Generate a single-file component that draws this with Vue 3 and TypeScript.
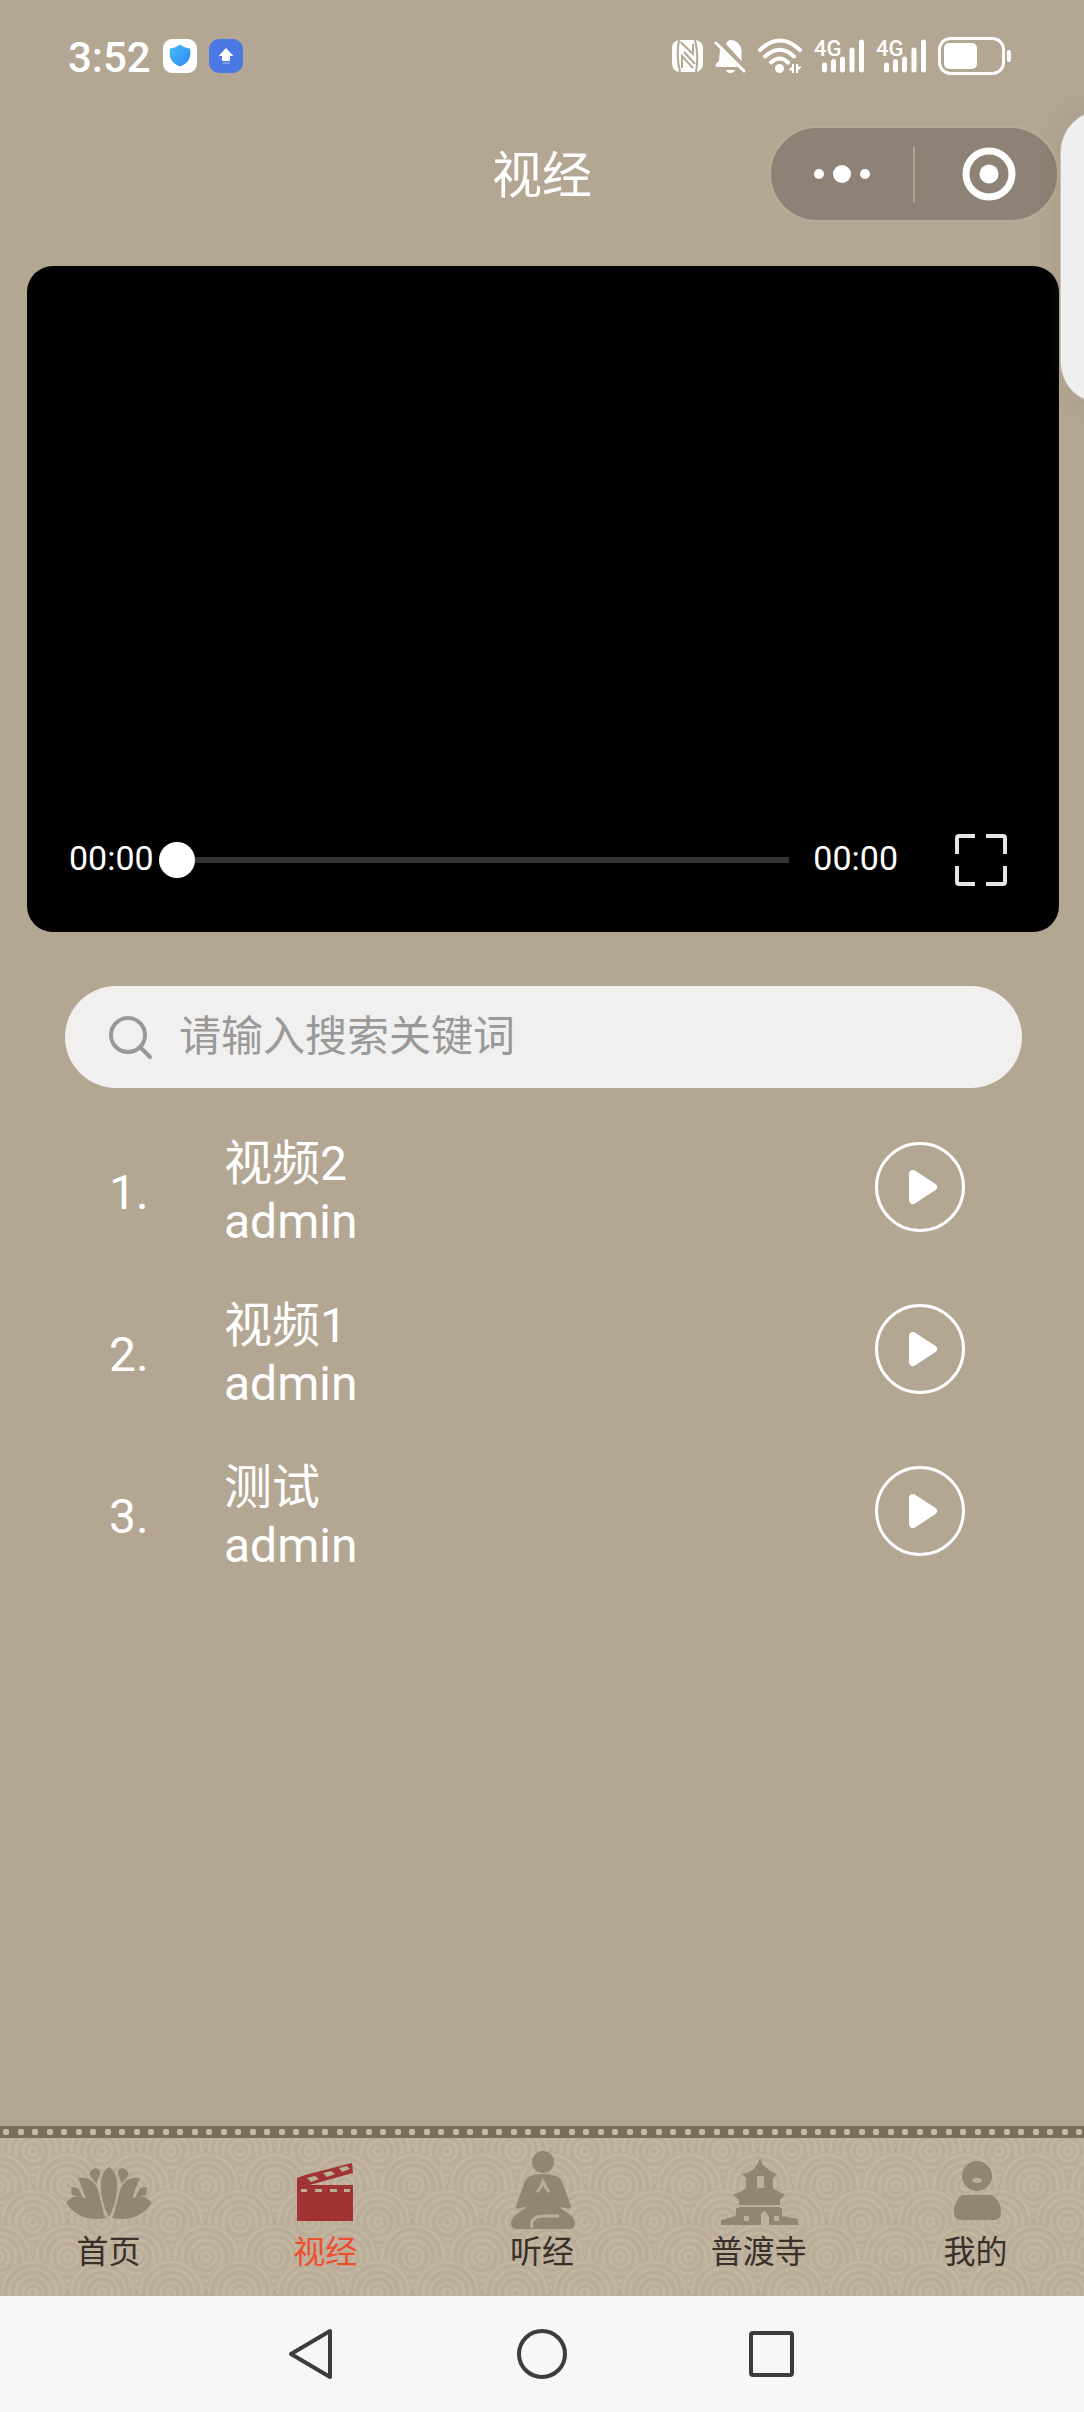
<script setup lang="ts">
import { ref } from 'vue'

interface Video {
  id: number
  title: string
  author: string
}

interface Tab {
  key: string
  label: string
}

const keyword = ref('')
const position = ref(0)
const activeTab = ref('video')

const videos: Video[] = [
  { id: 1, title: '视频2', author: 'admin' },
  { id: 2, title: '视频1', author: 'admin' },
  { id: 3, title: '测试', author: 'admin' },
]

const tabs: Tab[] = [
  { key: 'home', label: '首页' },
  { key: 'video', label: '视经' },
  { key: 'audio', label: '听经' },
  { key: 'temple', label: '普渡寺' },
  { key: 'mine', label: '我的' },
]
</script>

<template>
  <div class="screen">
    <header class="status">
      <div class="status-left">
        <span class="clock">3:52</span>
        <svg width="34" height="34" viewBox="0 0 34 34">
          <defs>
            <linearGradient id="shield" x1="0" y1="0" x2="1" y2="1">
              <stop offset="0" stop-color="#45bdf8" />
              <stop offset="1" stop-color="#2f86f0" />
            </linearGradient>
          </defs>
          <rect width="34" height="34" rx="9" fill="#fff" />
          <path d="M17 5.500C20 8 23 9 27 9.500 28.500 18 26 24 17 27.500 8 24 5.500 18 7 9.500 11 9 14 8 17 5.500z" fill="url(#shield)" />
        </svg>
        <svg width="34" height="34" viewBox="0 0 34 34">
          <rect width="34" height="34" rx="10" fill="#4a78e4" />
          <path d="M17 9.500l6.500 7H20.500v5h-7v-5H10.500z" fill="#fff" stroke="#fff" stroke-width="1" stroke-linejoin="round" />
          <path d="M13.500 24h7" stroke="#a9c0f5" stroke-width="1" />
        </svg>
      </div>
      <div class="status-right">
        <svg width="31" height="34" viewBox="0 0 31 34">
          <rect y="1" width="31" height="32" rx="8" fill="#fff" />
          <path d="M7 1q-3 16 1 32M23 1q4 16 1 32" fill="none" stroke="#b3a793" stroke-width="2" />
          <path d="M8.500 3L21 15V5M21 29L10 17v12M12 13l11 12" fill="none" stroke="#b3a793" stroke-width="2" />
        </svg>
        <svg width="32" height="34" viewBox="0 0 32 34">
          <path d="M12 5C13 2 15 1 16.500 1 22 1 27 5 27.500 12v10zM6 10L24 28H2c-1-2 0-4 3-6z" fill="#fff" />
          <path d="M2 4l28 28" stroke="#fff" stroke-width="3" stroke-linecap="round" />
          <path d="M12 31h9c-1 4-8 4-9 0z" fill="#fff" />
        </svg>
        <svg width="46" height="36" viewBox="0 0 46 36">
          <g fill="none" stroke="#fff" stroke-width="4" stroke-linecap="round">
            <path d="M3 12Q23-7 43 12M8 18.500Q23 5 37 18.500M14 24.500Q23 16.500 31 24.500" />
          </g>
          <circle cx="22.500" cy="30.500" r="4.500" fill="#fff" />
          <path d="M36 26v9M40 26v9" stroke="#fff" stroke-width="2" />
          <path d="M32 32l4-4v4zM44 29l-4 4v-4z" fill="#fff" stroke="#fff" />
        </svg>
        <svg v-for="sim in 2" :key="sim" width="51" height="52" viewBox="0 -8 51 52">
          <text x="0" y="18" class="network">4G</text>
          <g stroke="#fff" stroke-width="5" stroke-linecap="round">
            <path d="M10.500 27v5M19.500 23.500V32M28.500 21V32M38 12v20M47.500 4v28" />
          </g>
        </svg>
        <svg width="74" height="38" viewBox="0 0 74 38">
          <rect x="1.500" y="1.500" width="64" height="35" rx="11" fill="none" stroke="#fff" stroke-width="3" />
          <rect x="6" y="6" width="33" height="26" rx="5" fill="#fff" />
          <rect x="69" y="13" width="4" height="12" rx="2" fill="#fff" />
        </svg>
      </div>
    </header>

    <div class="titlebar">
      <h1>视经</h1>
      <div class="capsule">
        <button type="button" aria-label="更多">
          <svg width="60" height="60" viewBox="0 0 60 60" fill="#fff">
            <circle cx="7" cy="30" r="5" />
            <circle cx="30" cy="30" r="9" />
            <circle cx="53" cy="30" r="5" />
          </svg>
        </button>
        <span class="divider"></span>
        <button type="button" aria-label="关闭">
          <svg width="60" height="60" viewBox="0 0 60 60">
            <circle cx="33" cy="30" r="23" fill="none" stroke="#fff" stroke-width="7" />
            <circle cx="33" cy="30" r="9.500" fill="#fff" />
          </svg>
        </button>
      </div>
    </div>

    <main>
      <section class="player" aria-label="播放器">
        <div class="controls">
          <span class="time">00:00</span>
          <input v-model.number="position" class="seek" type="range" min="0" max="100" aria-label="播放进度" />
          <span class="time">00:00</span>
          <button type="button" class="fullscreen" aria-label="全屏">
            <svg width="54" height="54" viewBox="0 0 54 54" fill="none" stroke="#e6e6e6" stroke-width="4">
              <path d="M21 3H5Q3 3 3 5V21M32 3H49Q51 3 51 5V21M21 51H5Q3 51 3 49V33M32 51H49Q51 51 51 49V33" />
            </svg>
          </button>
        </div>
      </section>

      <label class="search">
        <svg width="46" height="46" viewBox="0 0 46 46" fill="none" stroke="#999" stroke-width="4" stroke-linecap="round">
          <circle cx="21" cy="21" r="17" />
          <path d="M33 33l10 10" />
        </svg>
        <input v-model="keyword" type="text" placeholder="请输入搜索关键词" aria-label="搜索" />
      </label>

      <ol class="list">
        <li v-for="(video, index) in videos" :key="video.id">
          <span class="number">{{ index + 1 }}.</span>
          <div class="info">
            <span class="name">{{ video.title }}</span>
            <span class="author">{{ video.author }}</span>
          </div>
          <button type="button" class="play" :aria-label="'播放' + video.title">
            <svg width="90" height="90" viewBox="0 0 90 90">
              <circle cx="45" cy="45" r="43.500" fill="none" stroke="#fff" stroke-width="3" />
              <path d="M38 32L58 45 38 58z" fill="#fff" stroke="#fff" stroke-width="8" stroke-linejoin="round" />
            </svg>
          </button>
        </li>
      </ol>
    </main>

    <nav class="tabbar">
      <svg class="waves" width="100%" height="100%" aria-hidden="true">
        <defs>
          <g id="fan">
            <circle r="34" fill="#baad99" />
            <g fill="none" stroke="#c3b6a1" stroke-width="3">
              <circle r="31" />
              <circle r="24" />
              <circle r="17" />
              <circle r="10" />
              <circle r="4" />
            </g>
          </g>
          <pattern id="seigaiha" width="69" height="71" patternUnits="userSpaceOnUse">
            <use href="#fan" x="-1" y="-11" />
            <use href="#fan" x="68" y="-11" />
            <use href="#fan" x="33" y="25" />
            <use href="#fan" x="-1" y="60" />
            <use href="#fan" x="68" y="60" />
            <use href="#fan" x="33" y="96" />
          </pattern>
          <pattern id="beads" width="29" height="12" patternUnits="userSpaceOnUse">
            <rect width="29" height="12" fill="#7b6d5c" />
            <rect x="3" y="3" width="6" height="6" rx="2" fill="#c6baa8" />
            <rect x="18" y="3" width="6" height="6" rx="2" fill="#c6baa8" />
          </pattern>
        </defs>
        <rect width="100%" height="100%" fill="url(#seigaiha)" />
        <rect width="100%" height="12" fill="url(#beads)" />
      </svg>
      <button
        v-for="tab in tabs"
        :key="tab.key"
        type="button"
        class="tab"
        :class="{ active: tab.key === activeTab }"
        @click="activeTab = tab.key"
      >
        <svg width="90" height="80" viewBox="0 0 90 80">
          <template v-if="tab.key === 'home'">
            <path d="M46 17c6 4 8 10 8 18 0 12-2 20-8 32-6-12-8-20-8-32 0-8 2-14 8-18z" />
            <path d="M29 20c3-3 8-2 8 2 1 4-3 5-3 12l-6-7c-2-1-2-5 1-7zM63 20c-3-3-8-2-8 2-1 4 3 5 3 12l6-7c2-1 2-5-1-7z" />
            <path d="M15 28c12-2 19 5 21 16l5 20c-13-5-19-14-21-24zM77 28c-12-2-19 5-21 16l-5 20c13-5 19-14 21-24z" />
            <path d="M8 37l7 1 5 10-11-3zM84 37l-7 1-5 10 11-3z" />
            <path d="M4 54c-1-4 2-3 6-7 14-2 25 7 33 21-14 3-29 0-39-14zM88 54c1-4-2-3-6-7-14-2-25 7-33 21 14 3 29 0 39-14z" />
          </template>
          <template v-else-if="tab.key === 'video'">
            <path d="M17 35h56v36H17z" />
            <path d="M17 28l8-3L72 13l1 10-47 13H17z" />
            <path class="light" d="M27 28l8-2 4 3-8 3zM43 23l8-2 4 3-8 3zM59 18l8-2 3 3-8 3zM21 39h6v3h-6zM35 39h7v3h-7zM50 39h7v3h-7zM64 39h6v3h-6z" />
          </template>
          <template v-else-if="tab.key === 'audio'">
            <circle cx="46" cy="12" r="11" />
            <path d="M33 26q13-4 26 0c5 2 6 5 8 11l7 19q-1 4-5 2l-7-1c4 4 16 8 16 16q0 6-6 6H20q-6 0-6-6c0-8 12-12 16-16l-7 1q-5 2-4-2l7-19c2-6 3-9 7-11z" />
            <path class="line" d="M40 42q4-4 6-10 3 6 6 10M35 78q-3-12 13-12l14 0" />
          </template>
          <template v-else-if="tab.key === 'temple'">
            <path d="M46 8l3 7q9 8 14 9l-4 4v10q6 5 12 6l-5 6v8h2v8l16 3v6H55v-7q-4-12-8-3v10H7v-5l15-4v-8h3v-8l-6-6q8-1 13-6V28l-4-4q9-1 15-9z" />
            <path class="light" d="M43 26h7v12h-7zM25 55h43v2H25zM30 66h5v5h-5zM60 66h5v5h-5z" />
          </template>
          <template v-else>
            <circle cx="46" cy="26" r="15" />
            <path d="M31 45h30q9 6 9 17 0 8-7 8H30q-7 0-7-8 0-11 8-17z" />
            <path class="light" d="M41 30q5-5 10 0 0 3-5 3t-5-3z" />
          </template>
        </svg>
        <span>{{ tab.label }}</span>
      </button>
    </nav>

    <footer class="system">
      <button type="button" aria-label="返回">
        <svg width="50" height="54" viewBox="0 0 50 54"><path d="M43 4v46L4 27z" /></svg>
      </button>
      <button type="button" aria-label="主屏幕">
        <svg width="54" height="54" viewBox="0 0 54 54"><circle cx="27" cy="27" r="23" /></svg>
      </button>
      <button type="button" aria-label="最近任务">
        <svg width="50" height="54" viewBox="0 0 50 54"><rect x="4" y="6" width="41" height="42" rx="2" /></svg>
      </button>
    </footer>

    <aside class="edge-panel" aria-hidden="true"></aside>
  </div>
</template>

<style>
body {
  margin: 0;
  background: #b3a793;
}
</style>

<style scoped>
.screen {
  position: relative;
  display: flex;
  flex-direction: column;
  min-height: 100vh;
  overflow: hidden;
  box-sizing: border-box;
  background: #b3a793;
  color: #fff;
  font-family: Roboto, "Noto Sans CJK SC", sans-serif;
}

button {
  display: flex;
  align-items: center;
  justify-content: center;
  margin: 0;
  padding: 0;
  border: 0;
  background: none;
  color: inherit;
  font: inherit;
  cursor: pointer;
}

svg {
  display: block;
  flex: none;
}

.status {
  display: flex;
  align-items: center;
  justify-content: space-between;
  height: 112px;
  padding: 0 72px 0 68px;
}

.status-left,
.status-right {
  display: flex;
  align-items: center;
}

.status-left {
  gap: 12px;
}

.status-right {
  gap: 11px;
}

.clock {
  padding-top: 4px;
  font-size: 42px;
  font-weight: 500;
  line-height: 48px;
}

.network {
  font-size: 22px;
  font-weight: 500;
  fill: #fff;
}

.titlebar {
  display: grid;
  grid-template-columns: 1fr auto 1fr;
  align-items: center;
  height: 124px;
  padding: 0 25px;
}

h1 {
  grid-column: 2;
  margin: 0;
  padding-top: 4px;
  font-size: 50px;
  font-weight: 400;
  line-height: 60px;
}

.capsule {
  display: flex;
  align-items: center;
  justify-self: end;
  width: 290px;
  height: 96px;
  box-sizing: border-box;
  border: 2px solid #b9ab98;
  border-radius: 48px;
  background: #8d8275;
}

.capsule button {
  flex: 1;
}

.divider {
  width: 2px;
  height: 56px;
  background: #ada190;
}

main {
  flex: 1;
  padding-top: 30px;
}

.player {
  display: flex;
  align-items: flex-end;
  aspect-ratio: 1032 / 666;
  margin: 0 25px 0 27px;
  box-sizing: border-box;
  border-radius: 26px;
  background: #000;
}

.controls {
  display: flex;
  align-items: center;
  width: 100%;
  height: 144px;
  padding: 0 51px 0 42px;
}

.time {
  padding-bottom: 4px;
  font-size: 34px;
  line-height: 40px;
}

.seek {
  flex: 1;
  min-width: 0;
  height: 36px;
  margin: 0 24px 0 5px;
  appearance: none;
  background: linear-gradient(#333, #333) center / 100% 6px no-repeat;
}

.seek::-webkit-slider-thumb {
  appearance: none;
  width: 36px;
  height: 36px;
  border-radius: 50%;
  background: #fff;
}

.fullscreen {
  margin-left: 56px;
}

.search {
  display: flex;
  align-items: center;
  gap: 26px;
  height: 102px;
  margin: 54px 62px 0 65px;
  padding: 0 42px;
  box-sizing: border-box;
  border-radius: 51px;
  background: #f1f0ef;
}

.search input {
  flex: 1;
  min-width: 0;
  height: 60px;
  padding: 0 0 8px;
  border: 0;
  outline: 0;
  background: none;
  color: #333;
  font: 42px/60px "Noto Sans CJK SC", sans-serif;
}

.search input::placeholder {
  color: #999;
  opacity: 1;
}

.list {
  margin: 0;
  padding: 18px 119px 0 109px;
  list-style: none;
}

.list li {
  display: flex;
  align-items: center;
  height: 162px;
}

.number {
  width: 115px;
  padding-top: 12px;
  font-size: 48px;
  line-height: 58px;
}

.info {
  display: flex;
  flex: 1;
  flex-direction: column;
  padding-top: 12px;
}

.name,
.author {
  font-size: 48px;
  line-height: 58px;
}

.tabbar {
  position: relative;
  display: flex;
  height: 170px;
}

.waves {
  position: absolute;
  inset: 0;
}

.tab {
  position: relative;
  flex: 1;
  flex-direction: column;
  justify-content: flex-start;
  padding-top: 24px;
  color: #3a302a;
  font-size: 32px;
  line-height: 44px;
}

.tab svg {
  fill: #928573;
}

.tab.active {
  color: #f04e30;
}

.tab.active svg {
  fill: #a03434;
}

.tab .light {
  fill: #bdb09b;
}

.tab .line {
  fill: none;
  stroke: #bdb09b;
  stroke-width: 3;
}

.system {
  display: flex;
  align-items: center;
  justify-content: center;
  gap: 178px;
  height: 116px;
  background: #f7f7f7;
}

.system svg {
  fill: none;
  stroke: #3c3c3c;
  stroke-width: 4;
  stroke-linejoin: round;
}

.edge-panel {
  position: absolute;
  top: 110px;
  right: -60px;
  width: 84px;
  height: 294px;
  box-sizing: border-box;
  border: 1px solid #c9c2ba;
  border-radius: 42px;
  background: #f0eff0;
  box-shadow: 0 0 24px rgba(120, 90, 60, 0.16);
}
</style>
